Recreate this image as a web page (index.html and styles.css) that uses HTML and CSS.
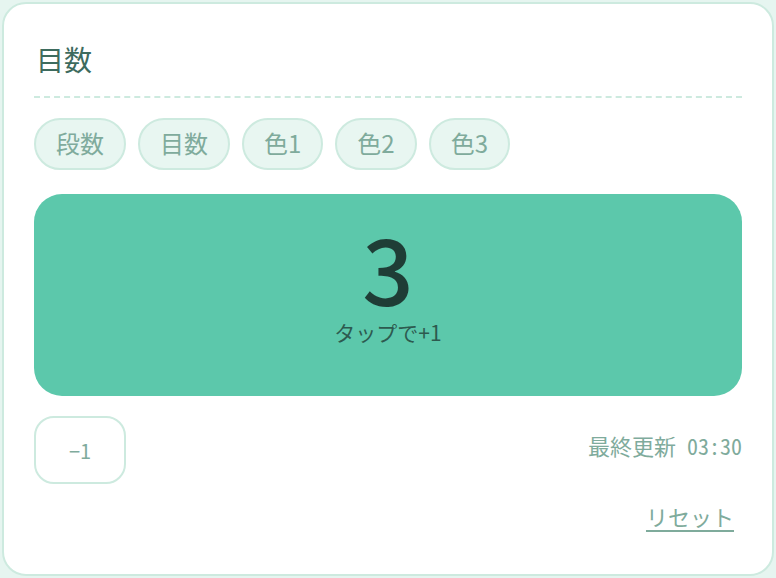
FILE: index.html
```html
<!DOCTYPE html>
<html lang="ja">
<head>
<meta charset="utf-8">
<link rel="stylesheet" href="styles.css">
</head>
<body>
<div class="card">
  <h1 class="title">目数</h1>
  <div class="chips">
    <button class="chip">段数</button>
    <button class="chip">目数</button>
    <button class="chip">色1</button>
    <button class="chip">色2</button>
    <button class="chip">色3</button>
  </div>
  <div class="tap">
    <div class="count">3</div>
    <div class="hint">タップで+1</div>
  </div>
  <div class="bottom">
    <button class="minus">−1</button>
    <div class="updated">最終更新 03:30</div>
  </div>
  <div class="reset-row">
    <button class="reset">リセット</button>
  </div>
</div>
</body>
</html>
```
FILE: styles.css
```css
html, body {
  margin: 0;
  padding: 0;
  background: #e6f5f0;
  width: 776px;
  height: 578px;
  overflow: hidden;
}
body {
  font-family: "Noto Sans CJK JP", sans-serif;
}
.card {
  box-sizing: border-box;
  margin: 2px;
  height: 574px;
  background: #ffffff;
  border: 2px solid #cdeadf;
  border-radius: 24px;
  padding: 0 30px;
  display: flex;
  flex-direction: column;
}
.title {
  margin: 0;
  padding: 37px 0 19px 2px;
  font-size: 28px;
  line-height: 36px;
  font-weight: 400;
  color: #3d6b5e;
  border-bottom: 2px dashed #cdeadf;
}
.chips {
  display: flex;
  gap: 12px;
  margin-top: 20px;
}
.chip {
  box-sizing: border-box;
  height: 52px;
  padding: 0 20px 3px;
  border: 2px solid #cdeadf;
  background: #e8f6f1;
  border-radius: 26px;
  font-family: "Noto Sans CJK JP", sans-serif;
  font-size: 24px;
  line-height: 30px;
  color: #7fab9c;
}
.tap {
  margin-top: 24px;
  height: 202px;
  box-sizing: border-box;
  background: #5cc8ab;
  border-radius: 28px;
  padding-top: 28px;
  display: flex;
  flex-direction: column;
  align-items: center;
}
.count {
  font-size: 90px;
  line-height: 90px;
  font-weight: 500;
  color: #1f3d36;
}
.hint {
  margin-top: 6px;
  font-size: 21px;
  line-height: 28px;
  color: #2d5a4f;
}
.bottom {
  margin-top: 20px;
  display: flex;
  align-items: flex-start;
  justify-content: space-between;
}
.minus {
  box-sizing: border-box;
  width: 92px;
  height: 68px;
  border: 2px solid #cdeadf;
  background: #ffffff;
  border-radius: 20px;
  font-family: "Noto Sans CJK JP", sans-serif;
  font-size: 20px;
  color: #7fab9c;
}
.updated {
  font-family: "Noto Sans Mono CJK JP", monospace;
  font-size: 22px;
  line-height: 30px;
  color: #7fab9c;
  margin-top: 14px;
}
.reset-row {
  margin-top: 17px;
  display: flex;
  justify-content: flex-end;
}
.reset {
  border: none;
  background: none;
  padding: 0 8px 0 0;
  font-family: "Noto Sans Mono CJK JP", monospace;
  font-size: 22px;
  line-height: 30px;
  color: #7fab9c;
  text-decoration: underline;
  text-decoration-thickness: 2px;
  text-underline-offset: 4px;
}
```
